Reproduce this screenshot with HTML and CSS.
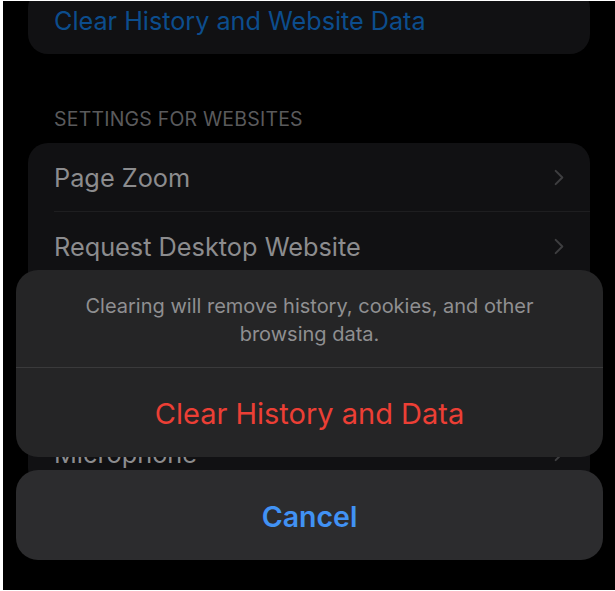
FILE: index.html
```html
<!DOCTYPE html>
<html lang="en">
<head>
<meta charset="utf-8">
<title>Clear History</title>
<link rel="stylesheet" href="styles.css">
</head>
<body>
<div class="screen">
  <div class="card card-top">
    <div class="row link-row"><span class="link">Clear History and Website Data</span></div>
  </div>
  <div class="section-header">SETTINGS FOR WEBSITES</div>
  <div class="card">
    <div class="row"><span class="label">Page Zoom</span><svg class="chev" viewBox="0 0 12 20"><path d="M2 2 L10 10 L2 18" /></svg></div>
    <div class="row"><span class="label">Request Desktop Website</span><svg class="chev" viewBox="0 0 12 20"><path d="M2 2 L10 10 L2 18" /></svg></div>
    <div class="row"><span class="label">Reader</span><svg class="chev" viewBox="0 0 12 20"><path d="M2 2 L10 10 L2 18" /></svg></div>
    <div class="row"><span class="label">Camera</span><svg class="chev" viewBox="0 0 12 20"><path d="M2 2 L10 10 L2 18" /></svg></div>
    <div class="row"><span class="label">Microphone</span><svg class="chev" viewBox="0 0 12 20"><path d="M2 2 L10 10 L2 18" /></svg></div>
  </div>

  <div class="sheet">
    <div class="alert">
      <div class="message">Clearing will remove history, cookies, and other browsing data.</div>
      <div class="action destructive">Clear History and Data</div>
    </div>
    <div class="cancel">Cancel</div>
  </div>
</div>
</body>
</html>
```
FILE: styles.css
```css
html, body {
  margin: 0;
  padding: 0;
  background: #ffffff;
}
body {
  font-family: "Inter", "Roboto", "Liberation Sans", sans-serif;
}
.screen {
  position: relative;
  margin: 1px 0 0 3px;
  width: 612px;
  height: 589px;
  background: #000;
  overflow: hidden;
}
.card {
  margin: 0 25px;
  background: #111113;
  border-radius: 20px;
  overflow: hidden;
}
.card-top {
  margin-top: -13px;
}
.row {
  height: 69px;
  margin-left: 26px;
  padding-right: 26px;
  display: flex;
  align-items: center;
  justify-content: space-between;
  border-bottom: 1px solid #1e1e20;
  box-sizing: border-box;
}
.row:last-child {
  border-bottom: none;
}
.link-row {
  height: 66px;
}
.link {
  color: #0c4d8d;
  font-size: 25.2px;
}
.label {
  color: #8c8c8e;
  font-size: 25.3px;
}
.chev {
  width: 10px;
  height: 17px;
  fill: none;
  stroke: #3e3e40;
  stroke-width: 2.4;
  stroke-linecap: round;
  stroke-linejoin: round;
}
.section-header {
  margin: 53px 25px 12px;
  padding-left: 26px;
  line-height: 24px;
  font-size: 19.5px;
  color: #5a5a5c;
  letter-spacing: 0.2px;
}
.sheet {
  position: absolute;
  left: 13px;
  right: 12px;
  top: 269px;
  display: flex;
  flex-direction: column;
  gap: 13px;
}
.alert {
  background: #252526;
  border-radius: 22px;
  overflow: hidden;
}
.message {
  height: 98px;
  box-sizing: border-box;
  padding: 22px 50px 0;
  text-align: center;
  font-size: 20px;
  line-height: 28px;
  color: #8f8f91;
  border-bottom: 1px solid #3a3a3b;
}
.action {
  height: 89px;
  display: flex;
  align-items: center;
  justify-content: center;
  font-size: 29px;
  padding-top: 2px;
  box-sizing: border-box;
}
.destructive {
  color: #ec3f35;
}
.cancel {
  height: 90px;
  background: #2c2c2e;
  border-radius: 22px;
  display: flex;
  align-items: center;
  justify-content: center;
  font-size: 28.5px;
  font-weight: 600;
  color: #4192f4;
  padding-top: 2px;
  box-sizing: border-box;
}
```
